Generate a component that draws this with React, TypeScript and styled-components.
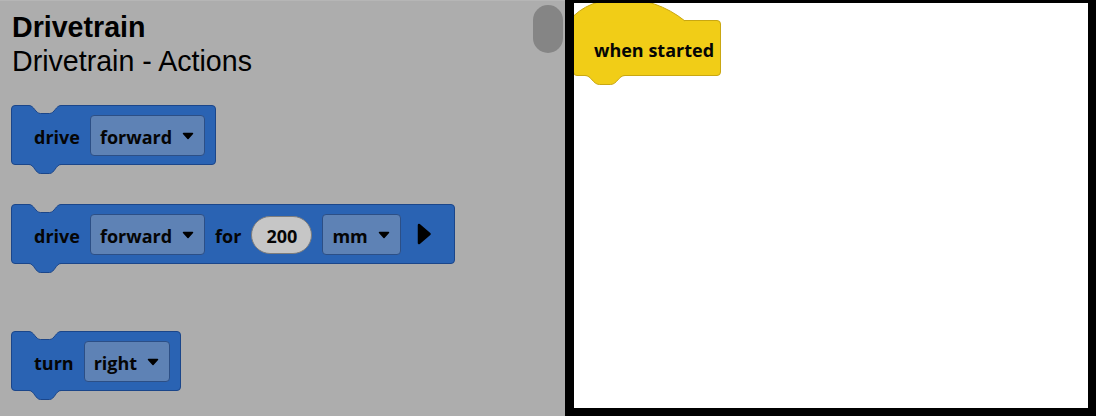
import React from 'react';
import styled, {createGlobalStyle} from 'styled-components';

const PANEL_BG = '#adadad';
const BLOCK_BLUE = '#2a63b3';
const BLOCK_BLUE_EDGE = '#1b468a';
const HAT_YELLOW = '#f1cd17';
const HAT_YELLOW_EDGE = '#c9a712';

const GlobalStyle = createGlobalStyle`
  html, body {
    margin: 0;
    padding: 0;
    background: #000;
  }
  body {
    font-family: "Open Sans", "Liberation Sans", sans-serif;
  }
`;

// S-shaped notch / tab outline between (0, y0) and (w, y0), dipping by d
const notchCurve = (w: number, y0: number, d: number) =>
  `M0,${y0} C${w * 0.16},${y0} ${w * 0.2},${y0 + d} ${w * 0.36},${y0 + d} ` +
  `H${w * 0.64} C${w * 0.8},${y0 + d} ${w * 0.84},${y0} ${w},${y0}`;

const Screen = styled.div`
  display: flex;
  width: 1096px;
  height: 416px;
  overflow: hidden;
`;

const Flyout = styled.div`
  position: relative;
  width: 565px;
  flex: none;
  background: ${PANEL_BG};
  border-top: 1px solid #b6b6b6;
  box-sizing: border-box;
  padding: 9px 0 0 12px;
  overflow: hidden;
`;

const ScrollThumb = styled.div`
  position: absolute;
  top: 4px;
  right: 2px;
  width: 30px;
  height: 48px;
  border-radius: 15px;
  background: #858585;
`;

const Category = styled.div`
  font-family: "Liberation Sans", Arial, sans-serif;
  font-size: 28.6px;
  line-height: 34px;
  color: #000;
`;

const CategoryTitle = styled(Category)`
  font-weight: 700;
`;

const BlockList = styled.div`
  display: flex;
  flex-direction: column;
  align-items: flex-start;
  margin-left: -1px;
`;

const Block = styled.div<{$top: number}>`
  position: relative;
  display: inline-flex;
  align-items: center;
  gap: 10px;
  box-sizing: border-box;
  height: 60px;
  margin-top: ${p => p.$top}px;
  padding: 0 10px 0 22px;
  background: ${BLOCK_BLUE};
  border: 1px solid ${BLOCK_BLUE_EDGE};
  border-radius: 4px;
`;

const Notch = styled.svg`
  position: absolute;
  top: -1px;
  left: 17px;
  overflow: visible;
`;

const Tab = styled.svg<{$left: number}>`
  position: absolute;
  top: 100%;
  left: ${p => p.$left}px;
  overflow: visible;
`;

const Label = styled.span`
  padding-top: 3px;
  font-size: 18px;
  font-weight: 700;
  color: #050505;
  white-space: nowrap;
`;

const Dropdown = styled.div`
  display: flex;
  align-items: center;
  gap: 10px;
  box-sizing: border-box;
  height: 41px;
  padding: 0 10px 0 9px;
  margin-top: 1px;
  background: #5e82b5;
  border: 1px solid #2c4f86;
  border-radius: 4px;
`;

const NumberField = styled.div`
  display: flex;
  align-items: center;
  justify-content: center;
  box-sizing: border-box;
  width: 61px;
  height: 38px;
  margin-top: 1px;
  background: #c6c6c6;
  border: 1px solid #7d7d7d;
  border-radius: 19px;
`;

const Expand = styled.svg`
  margin: 0 13px 0 6px;
`;

const Workspace = styled.div`
  flex: 1;
  display: flex;
  background: #000;
  padding: 3px 8px 8px 9px;
`;

const Canvas = styled.div`
  position: relative;
  flex: 1;
  background: #fff;
  overflow: hidden;
`;

const HatBlock = styled.div<{$x: number; $y: number}>`
  position: absolute;
  left: ${p => p.$x}px;
  top: ${p => p.$y}px;
  display: inline-flex;
  align-items: center;
  box-sizing: border-box;
  height: 56px;
  padding: 1px 6px 0 20px;
  background: ${HAT_YELLOW};
  border: 1px solid ${HAT_YELLOW_EDGE};
  border-radius: 0 4px 4px 4px;
`;

const HatCap = styled.svg`
  position: absolute;
  left: -1px;
  top: -31px;
  overflow: visible;
`;

const BlockNotch = () => (
  <Notch width={32} height={10}>
    <path d={`${notchCurve(32, 0.5, 8)} L32,-0.5 L0,-0.5 Z`} fill={PANEL_BG} />
    <path d={notchCurve(32, 0.5, 8)} fill="none" stroke={BLOCK_BLUE_EDGE} />
  </Notch>
);

const BlockTab: React.FC<{fill: string; edge: string; left: number; width: number}> = ({
  fill,
  edge,
  left,
  width,
}) => (
  <Tab $left={left} width={width} height={10}>
    <path d={`${notchCurve(width, 0.5, 9)} L${width},-1 L0,-1 Z`} fill={fill} />
    <path d={notchCurve(width, 0.5, 9)} fill="none" stroke={edge} />
  </Tab>
);

const Caret = () => (
  <svg width={12} height={8} viewBox="0 0 12 8">
    <path d="M1.5,1.5 H10.5 L6,6.5 Z" fill="#000" stroke="#000" strokeWidth={1.5} strokeLinejoin="round" />
  </svg>
);

const Choice: React.FC<{value: string}> = ({value}) => (
  <Dropdown>
    <Label>{value}</Label>
    <Caret />
  </Dropdown>
);

const FlyoutBlock: React.FC<{top: number; children: React.ReactNode}> = ({top, children}) => (
  <Block $top={top}>
    <BlockNotch />
    {children}
    <BlockTab fill={BLOCK_BLUE} edge={BLOCK_BLUE_EDGE} left={17} width={32} />
  </Block>
);

export default function App() {
  return (
    <>
      <GlobalStyle />
      <Screen>
        <Flyout>
          <CategoryTitle>Drivetrain</CategoryTitle>
          <Category>Drivetrain - Actions</Category>
          <BlockList>
            <FlyoutBlock top={27}>
              <Label>drive</Label>
              <Choice value="forward" />
            </FlyoutBlock>
            <FlyoutBlock top={39}>
              <Label>drive</Label>
              <Choice value="forward" />
              <Label>for</Label>
              <NumberField>
                <Label>200</Label>
              </NumberField>
              <Choice value="mm" />
              <Expand width={14} height={22} viewBox="0 0 14 22">
                <path d="M2,2 L12.5,11 L2,20 Z" fill="#000" stroke="#000" strokeWidth={2.5} strokeLinejoin="round" />
              </Expand>
            </FlyoutBlock>
            <FlyoutBlock top={67}>
              <Label>turn</Label>
              <Choice value="right" />
            </FlyoutBlock>
          </BlockList>
          <ScrollThumb />
        </Flyout>
        <Workspace>
          <Canvas>
            <HatBlock $x={-1} $y={17}>
              <HatCap width={114} height={32}>
                <path d="M-4,31 C20,1 75,1 112,31 L112,32.5 L-4,32.5 Z" fill={HAT_YELLOW} />
                <path d="M-4,31 C20,1 75,1 112,31" fill="none" stroke={HAT_YELLOW_EDGE} />
              </HatCap>
              <Label>when started</Label>
              <BlockTab fill={HAT_YELLOW} edge={HAT_YELLOW_EDGE} left={11} width={40} />
            </HatBlock>
          </Canvas>
        </Workspace>
      </Screen>
    </>
  );
}
